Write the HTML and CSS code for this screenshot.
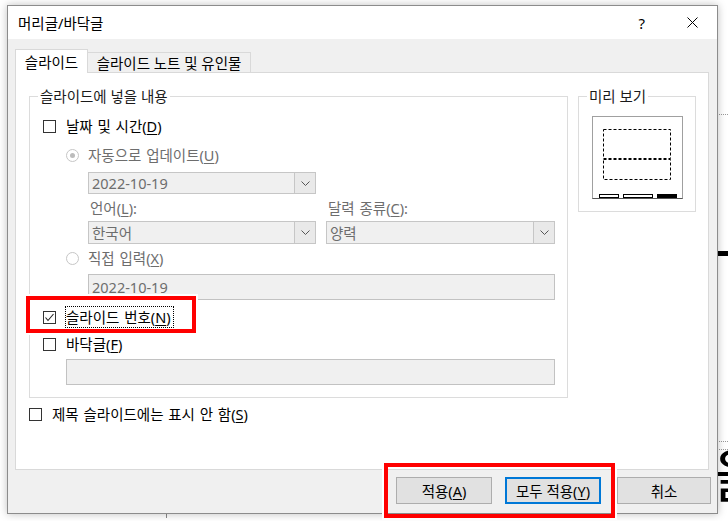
FILE: index.html
```html
<!DOCTYPE html>
<html lang="ko">
<head>
<meta charset="utf-8">
<title>머리글/바닥글</title>
<link rel="stylesheet" href="styles.css">
</head>
<body>
<div class="desk-line l1"></div>
<div class="desk-bar"></div>
<div class="desk-line l2"></div>
<div class="desk-line l3"></div>
<div class="desk-glyph">을</div>
<div class="desk-tick"></div>

<div class="dialog">
  <div class="titlebar">
    <span class="title">머리글/바닥글</span>
    <span class="help">?</span>
    <svg class="close" viewBox="0 0 11 11"><path d="M0.5 0.5L10.5 10.5M10.5 0.5L0.5 10.5" stroke="#000" stroke-width="1" fill="none"/></svg>
  </div>
  <div class="client">
    <div class="tabs">
      <div class="tab tab-active">슬라이드</div>
      <div class="tab tab-idle">슬라이드 노트 및 유인물</div>
    </div>
    <div class="panel">
      <div class="col">
        <div class="group g-main">
          <div class="legend">슬라이드에 넣을 내용</div>
          <div class="gbody">
            <div class="row r-date"><span class="cb"></span><span>날짜 및 시간(<u>D</u>)</span></div>
            <div class="row r-auto dis"><span class="radio"><span class="dot"></span></span><span>자동으로 업데이트(<u>U</u>)</span></div>
            <div class="combo combo-date"><span class="val">2022-10-19</span><span class="arr"><svg width="9" height="5" viewBox="0 0 9 5"><path d="M0.5 0.5L4.5 4.5L8.5 0.5" stroke="#555" fill="none"/></svg></span></div>
            <div class="pair labels dis"><span>언어(<u>L</u>):</span><span>달력 종류(<u>C</u>):</span></div>
            <div class="pair combos">
              <div class="combo"><span class="val">한국어</span><span class="arr"><svg width="9" height="5" viewBox="0 0 9 5"><path d="M0.5 0.5L4.5 4.5L8.5 0.5" stroke="#555" fill="none"/></svg></span></div>
              <div class="combo"><span class="val">양력</span><span class="arr"><svg width="9" height="5" viewBox="0 0 9 5"><path d="M0.5 0.5L4.5 4.5L8.5 0.5" stroke="#555" fill="none"/></svg></span></div>
            </div>
            <div class="row r-manual dis"><span class="radio"></span><span>직접 입력(<u>X</u>)</span></div>
            <div class="field field-date">2022-10-19</div>
            <div class="row r-num"><span class="cb cb-num"><svg width="11" height="11" viewBox="0 0 11 11"><path d="M1.5 5.5L4 8.5L9.5 2" stroke="#222" stroke-width="1.1" fill="none"/></svg></span><span class="focus">슬라이드 번호(<u>N</u>)</span></div>
            <div class="row r-footer"><span class="cb"></span><span>바닥글(<u>F</u>)</span></div>
            <div class="field field-footer"></div>
          </div>
        </div>
        <div class="row r-title"><span class="cb"></span><span>제목 슬라이드에는 표시 안 함(<u>S</u>)</span></div>
      </div>
      <div class="group g-prev">
        <div class="legend">미리 보기</div>
        <svg class="preview" viewBox="0 0 91 83" width="91" height="83">
          <rect x="0.5" y="0.5" width="90" height="82" fill="#fff" stroke="#a0a0a0"/>
          <path d="M0.5 82.5H90.5" stroke="#555"/>
          <rect x="11.5" y="13.5" width="67" height="29" fill="none" stroke="#000" stroke-dasharray="3 2"/>
          <rect x="11.5" y="43.5" width="67" height="20" fill="none" stroke="#000" stroke-dasharray="3 2"/>
          <rect x="7.5" y="78.5" width="19" height="3" fill="#fff" stroke="#000"/>
          <rect x="31.5" y="78.5" width="29" height="3" fill="#fff" stroke="#000"/>
          <rect x="65" y="78" width="20" height="4" fill="#000"/>
        </svg>
      </div>
    </div>
    <div class="buttons">
      <div class="btn b1">적용(<u>A</u>)</div>
      <div class="btn b2">모두 적용(<u>Y</u>)</div>
      <div class="btn b3">취소</div>
    </div>
  </div>
</div>

<div class="hl hl1"></div>
<div class="hl hl2"></div>
</body>
</html>
```

FILE: styles.css
```css
* { box-sizing: border-box; }
html, body { margin: 0; padding: 0; }
body {
  width: 728px;
  height: 521px;
  position: relative;
  overflow: hidden;
  background: #fff;
  font-family: "Noto Sans", "Noto Sans CJK KR", sans-serif;
  font-size: 14.5px;
  color: #000;
}
u { text-decoration-thickness: 1px; text-underline-offset: 2px; }

/* background document behind dialog */
.desk-line { position: absolute; left: 719px; width: 9px; border-top: 1px dotted #9a9a9a; }
.l1 { top: 114px; }
.l2 { top: 441px; }
.l3 { top: 449px; }
.desk-bar { position: absolute; left: 718px; top: 251px; width: 10px; height: 5px; background: #000; }
.desk-glyph {
  position: absolute; left: 712px; top: 443px;
  font-family: "Noto Sans CJK KR", sans-serif;
  font-size: 58px; line-height: 1;
}
.desk-tick { position: absolute; left: 166px; top: 513px; width: 1px; height: 5px; background: #8a8a8a; }

/* dialog */
.dialog {
  position: absolute; left: 7px; top: 5px;
  width: 711px; height: 509px;
  border: 1px solid #8c8c8c;
  background: #f0f0f0;
  box-shadow: 0 0 8px rgba(0, 0, 0, 0.25);
  display: flex; flex-direction: column;
}
.titlebar {
  flex: none; height: 33px; background: #fff;
  display: flex; align-items: center;
  padding: 0 19px 0 10px;
}
.title { flex: 1; line-height: 18px; }
.help { font-size: 15px; margin-right: 42px; line-height: 18px; }
.close { width: 11px; height: 11px; display: block; }

.client {
  flex: 1;
  padding: 10px 6px 0 7px;
  display: flex; flex-direction: column; align-items: flex-start;
}
.tabs {
  display: flex; align-items: flex-end;
  height: 24px; margin-bottom: -1px;
  position: relative; z-index: 1;
}
.tab {
  border: 1px solid #d9d9d9; border-bottom: none;
  display: flex; align-items: center; justify-content: center;
  line-height: 18px; white-space: nowrap;
}
.tab-active { width: 73px; height: 24px; background: #fff; }
.tab-idle { width: 164px; height: 20px; margin-left: -1px; margin-bottom: 1px; background: #f0f0f0; }

.panel {
  width: 694px; height: 398px;
  background: #fff; border: 1px solid #d9d9d9;
  display: flex; align-items: flex-start; gap: 10px;
  padding: 23px 0 0 13px;
}
.col { display: flex; flex-direction: column; }
.group { border: 1px solid #dcdcdc; }
.legend {
  width: max-content; height: 18px; line-height: 18px;
  margin: -10px 0 0 8px; padding: 0 2px;
  background: #fff; color: #1a1a1a;
}
.g-main { width: 539px; height: 302px; }
.gbody { padding-left: 13px; display: flex; flex-direction: column; align-items: flex-start; }
.g-prev { width: 118px; height: 116px; }
.preview { display: block; margin: 11px 0 0 13px; }

.row { display: flex; align-items: center; height: 20px; line-height: 18px; white-space: nowrap; word-spacing: 1px; }
.dis { color: #6d6d6d; }
.cb {
  flex: none; width: 13px; height: 13px;
  border: 1px solid #333; background: #fff; margin-right: 10px;
  display: flex; align-items: center; justify-content: center;
}
.cb-num { margin-right: 9px; }
.radio {
  flex: none; width: 13px; height: 13px; border-radius: 50%;
  border: 1px solid #c6c6c6; background: #fff; margin-right: 9px;
  display: flex; align-items: center; justify-content: center;
}
.dot { width: 5px; height: 5px; border-radius: 50%; background: #bcbcbc; }

.r-date { margin-top: 11px; }
.r-auto { margin-top: 9px; margin-left: 23px; }
.combo-date { margin-top: 7px; margin-left: 45px; width: 228px; height: 22px; }
.pair { display: grid; grid-template-columns: 228px 229px; column-gap: 10px; margin-left: 45px; }
.labels { margin-top: 4px; height: 20px; line-height: 20px; word-spacing: 1px; }
.labels span { padding-left: 2px; }
.combos { margin-top: 3px; height: 23px; }
.r-manual { margin-top: 4px; margin-left: 23px; }
.field-date { margin-top: 6px; margin-left: 45px; width: 467px; height: 26px; }
.r-num { margin-top: 5px; height: 24px; }
.r-footer { margin-top: 5px; }
.field-footer { margin-top: 5px; margin-left: 23px; width: 489px; height: 26px; }
.r-title { margin-top: 6px; }

.focus { border: 1px dotted #000; line-height: 20px; padding: 0 2px 0 0; }

.combo {
  display: flex; border: 1px solid #c6c6c6; background: #f0f0f0;
  color: #6d6d6d; height: 23px;
}
.combo-date { height: 22px; }
.combo .val { flex: 1; padding-left: 3px; display: flex; align-items: center; }
.combo .arr {
  width: 21px; border-left: 1px solid #c6c6c6; background: #e9e9e9;
  display: flex; align-items: center; justify-content: center;
}
.combo .arr svg { display: block; }

.field {
  border: 1px solid #c2c2c2; background: #f0f0f0; color: #6d6d6d;
  padding-left: 3px; display: flex; align-items: center;
}

.buttons { display: flex; margin-top: 7px; align-self: flex-end; }
.btn {
  height: 27px; border: 1px solid #adadad; background: #e1e1e1;
  display: flex; align-items: center; justify-content: center;
  line-height: 18px;
}
.b1 { width: 96px; }
.b2 { width: 96px; margin-left: 13px; border: 2px solid #0078d7; }
.b3 { width: 94px; margin-left: 16px; }

/* annotation overlays */
.hl { position: absolute; border: 4px solid #ff0000; outline: 2px solid #fff; }
.hl1 { left: 26px; top: 296px; width: 170px; height: 37px; }
.hl2 { left: 384px; top: 463px; width: 231px; height: 55px; }
```
